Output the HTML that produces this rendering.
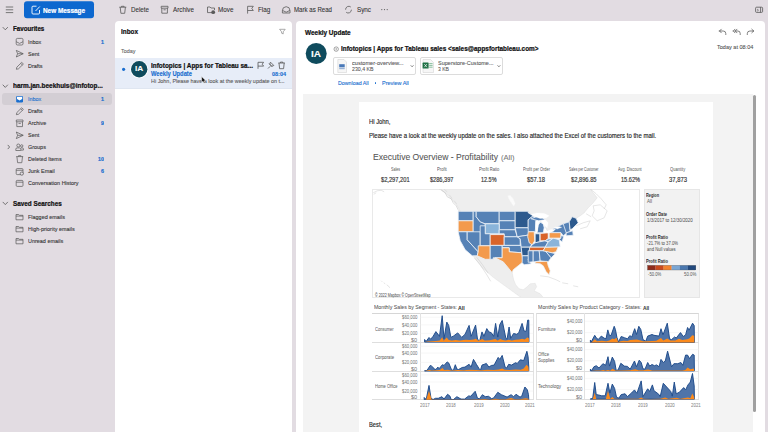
<!DOCTYPE html>
<html><head><meta charset="utf-8"><style>
html,body{margin:0;padding:0;}
body{width:768px;height:432px;overflow:hidden;position:relative;background:#e2dce2;font-family:"Liberation Sans",sans-serif;}
.t{position:absolute;white-space:nowrap;transform:scale(0.25);transform-origin:0 0;}
.r{position:absolute;display:block;}
</style></head><body>
<svg class="r" style="left:0px;top:0px;" width="110" height="20" viewBox="0 0 110 20">
<g stroke="#6a6a6a" stroke-width="0.9" stroke-linecap="round">
<line x1="6.2" y1="7" x2="12.8" y2="7"/><line x1="6.2" y1="9.8" x2="12.8" y2="9.8"/><line x1="6.2" y1="12.6" x2="12.8" y2="12.6"/></g>
<rect x="24" y="1.2" width="70" height="17" rx="3" fill="#0d68cf"/>
<g fill="none" stroke="#fff" stroke-width="0.9"><path d="M36.5 6.2 H33 a1 1 0 0 0 -1 1 V13 a1 1 0 0 0 1 1 H38.5 a1 1 0 0 0 1 -1 V10"/><path d="M35.5 11 L39.8 6.5"/></g>
</svg>
<div class="t" style="left:43.00px;top:-0.10px;font-size:29.20px;line-height:80px;color:#ffffff;transform:scale(0.2193,0.25);-webkit-text-stroke:0.95px #ffffff;font-weight:700;">New Message</div>
<svg class="r" style="left:110px;top:0px;" width="290" height="20" viewBox="110 0 290 20">
<g fill="none" stroke="#5a5a5a" stroke-width="0.8" stroke-linejoin="round">
<path d="M119.3 7.2 H126.3 M121.5 7.2 V6.3 H124.1 V7.2 M120.2 7.2 L120.9 13.3 H124.7 L125.4 7.2"/>
<path d="M161.2 6.3 H168 V8.2 H161.2 Z M161.8 8.2 V13.2 H167.4 V8.2 M163.5 9.8 H165.7"/>
<path d="M207.5 7 V12.6 H212 M207.5 7 H210 L211 8 H214.5 V10"/>
<path d="M247.6 13.6 V6.3 H253.3 L251.8 8.4 L253.3 10.5 H247.6"/>
<path d="M282.4 10.6 Q282.4 6.9 286.2 6.7 Q290 6.9 290 10.6 V13 H282.4 Z M282.4 10.4 L286.2 12.2 L290 10.4"/>
<path d="M350.8 7 A3.2 3.2 0 0 0 345.6 9.7 M346.2 12.3 A3.2 3.2 0 0 0 351.4 9.7"/>
</g>
<circle cx="213.2" cy="12.2" r="1.9" fill="#5a5a5a"/>
<g fill="#5a5a5a"><circle cx="381.8" cy="9.6" r="0.6"/><circle cx="384.5" cy="9.6" r="0.6"/><circle cx="387.2" cy="9.6" r="0.6"/></g>
</svg>
<div class="t" style="left:130.80px;top:-0.20px;font-size:26.40px;line-height:80px;color:#333333;transform:scale(0.2359,0.25);-webkit-text-stroke:0.33px #333333;">Delete</div>
<div class="t" style="left:172.90px;top:-0.20px;font-size:26.40px;line-height:80px;color:#333333;transform:scale(0.2386,0.25);-webkit-text-stroke:0.33px #333333;">Archive</div>
<div class="t" style="left:218.20px;top:-0.20px;font-size:26.40px;line-height:80px;color:#333333;transform:scale(0.2401,0.25);-webkit-text-stroke:0.33px #333333;">Move</div>
<div class="t" style="left:257.80px;top:-0.20px;font-size:26.40px;line-height:80px;color:#333333;transform:scale(0.2395,0.25);-webkit-text-stroke:0.33px #333333;">Flag</div>
<div class="t" style="left:294.00px;top:-0.20px;font-size:26.40px;line-height:80px;color:#333333;transform:scale(0.2313,0.25);-webkit-text-stroke:0.33px #333333;">Mark as Read</div>
<div class="t" style="left:356.50px;top:-0.20px;font-size:26.40px;line-height:80px;color:#333333;transform:scale(0.2385,0.25);-webkit-text-stroke:0.33px #333333;">Sync</div>
<svg class="r" style="left:752px;top:4px;" width="14" height="12" viewBox="752 4 14 12"><rect x="755.6" y="7.2" width="7" height="5.2" rx="1" fill="none" stroke="#555" stroke-width="0.8"/><path d="M760.6 7.2 V12.4" stroke="#555" stroke-width="0.8"/><path d="M757 9 L758.5 10.2 L757 11.2" fill="none" stroke="#555" stroke-width="0.6"/></svg>
<svg class="r" style="left:0px;top:20px;" width="112" height="230" viewBox="0 20 112 230">
<g fill="none" stroke="#505050" stroke-width="0.75" stroke-linecap="round" stroke-linejoin="round">
<path d="M3 27.4 L5.3 29.8 L7.6 27.4"/>
<path d="M3 85 L5.3 87.4 L7.6 85"/>
<path d="M3 202.2 L5.3 204.6 L7.6 202.2"/>
<path d="M8 145.2 L9.6 147 L8 148.8"/>
</g>
</svg>
<div class="t" style="left:12.70px;top:19.10px;font-size:26.80px;line-height:80px;color:#111;transform:scale(0.2310,0.25);-webkit-text-stroke:0.87px #111;font-weight:700;">Favourites</div>
<div class="t" style="left:12.70px;top:76.10px;font-size:28.00px;line-height:80px;color:#111;transform:scale(0.2295,0.25);-webkit-text-stroke:0.91px #111;font-weight:700;">harm.jan.beekhuis@infotop...</div>
<div class="t" style="left:12.50px;top:193.90px;font-size:26.80px;line-height:80px;color:#111;transform:scale(0.2374,0.25);-webkit-text-stroke:0.87px #111;font-weight:700;">Saved Searches</div>
<div class="r" style="left:2px;top:93.2px;width:110px;height:11.599999999999994px;background:#d3ced4;border-radius:3px;"></div>
<div class="t" style="left:28.00px;top:31.70px;font-size:24.80px;line-height:80px;color:#333333;transform:scale(0.2198,0.25);-webkit-text-stroke:0.43px #333333;">Inbox</div>
<div class="t" style="left:101.05px;top:31.70px;font-size:21.20px;line-height:80px;color:#1a6ecf;-webkit-text-stroke:0.69px #1a6ecf;font-weight:700;">1</div>
<div class="t" style="left:28.00px;top:43.70px;font-size:24.80px;line-height:80px;color:#333333;transform:scale(0.2198,0.25);-webkit-text-stroke:0.43px #333333;">Sent</div>
<div class="t" style="left:28.00px;top:55.80px;font-size:24.80px;line-height:80px;color:#333333;transform:scale(0.2198,0.25);-webkit-text-stroke:0.43px #333333;">Drafts</div>
<div class="t" style="left:28.00px;top:89.20px;font-size:24.80px;line-height:80px;color:#1a6ecf;transform:scale(0.2198,0.25);-webkit-text-stroke:0.43px #1a6ecf;">Inbox</div>
<div class="t" style="left:101.05px;top:89.20px;font-size:21.20px;line-height:80px;color:#1a6ecf;-webkit-text-stroke:0.69px #1a6ecf;font-weight:700;">1</div>
<div class="t" style="left:28.00px;top:101.20px;font-size:24.80px;line-height:80px;color:#333333;transform:scale(0.2198,0.25);-webkit-text-stroke:0.43px #333333;">Drafts</div>
<div class="t" style="left:28.00px;top:113.30px;font-size:24.80px;line-height:80px;color:#333333;transform:scale(0.2198,0.25);-webkit-text-stroke:0.43px #333333;">Archive</div>
<div class="t" style="left:101.05px;top:113.30px;font-size:21.20px;line-height:80px;color:#1a6ecf;-webkit-text-stroke:0.69px #1a6ecf;font-weight:700;">9</div>
<div class="t" style="left:28.00px;top:125.30px;font-size:24.80px;line-height:80px;color:#333333;transform:scale(0.2198,0.25);-webkit-text-stroke:0.43px #333333;">Sent</div>
<div class="t" style="left:28.00px;top:137.20px;font-size:24.80px;line-height:80px;color:#333333;transform:scale(0.2198,0.25);-webkit-text-stroke:0.43px #333333;">Groups</div>
<div class="t" style="left:28.00px;top:149.30px;font-size:24.80px;line-height:80px;color:#333333;transform:scale(0.2198,0.25);-webkit-text-stroke:0.43px #333333;">Deleted Items</div>
<div class="t" style="left:98.11px;top:149.30px;font-size:21.20px;line-height:80px;color:#1a6ecf;-webkit-text-stroke:0.69px #1a6ecf;font-weight:700;">10</div>
<div class="t" style="left:28.00px;top:161.30px;font-size:24.80px;line-height:80px;color:#333333;transform:scale(0.2198,0.25);-webkit-text-stroke:0.43px #333333;">Junk Email</div>
<div class="t" style="left:101.05px;top:161.30px;font-size:21.20px;line-height:80px;color:#1a6ecf;-webkit-text-stroke:0.69px #1a6ecf;font-weight:700;">6</div>
<div class="t" style="left:28.00px;top:173.30px;font-size:24.80px;line-height:80px;color:#333333;transform:scale(0.2198,0.25);-webkit-text-stroke:0.43px #333333;">Conversation History</div>
<div class="t" style="left:28.00px;top:206.80px;font-size:24.80px;line-height:80px;color:#333333;transform:scale(0.2198,0.25);-webkit-text-stroke:0.43px #333333;">Flagged emails</div>
<div class="t" style="left:28.00px;top:218.80px;font-size:24.80px;line-height:80px;color:#333333;transform:scale(0.2198,0.25);-webkit-text-stroke:0.43px #333333;">High-priority emails</div>
<div class="t" style="left:28.00px;top:230.80px;font-size:24.80px;line-height:80px;color:#333333;transform:scale(0.2198,0.25);-webkit-text-stroke:0.43px #333333;">Unread emails</div>
<svg class="r" style="left:10px;top:30px;" width="20" height="220" viewBox="10 30 20 220"><rect x="16.2" y="38.400000000000006" width="6.8" height="6.6" rx="1.2" fill="none" stroke="#585858" stroke-width="0.7"/><path d="M16.2 41.7 L19.6 43.400000000000006 L23 41.7" fill="none" stroke="#585858" stroke-width="0.7"/><path d="M16.3 50.400000000000006 L23.2 53.7 L16.3 57.00000000000001 L17.6 53.7 Z M17.6 53.7 H23.2" fill="none" stroke="#585858" stroke-width="0.7" stroke-linejoin="round"/><path d="M16.4 69.3 L16.8 67.2 L21.7 62.4 L23.4 64.0 L18.5 68.8 Z M20.7 63.4 L22.4 65.0" fill="none" stroke="#585858" stroke-width="0.7" stroke-linejoin="round"/><rect x="16.2" y="95.9" width="6.8" height="6.6" rx="1.2" fill="#1a6ecf"/><path d="M17 96.7 H22.2 V99.10000000000001 L19.6 100.5 L17 99.10000000000001 Z" fill="#fff"/><path d="M16.4 114.7 L16.8 112.60000000000001 L21.7 107.80000000000001 L23.4 109.4 L18.5 114.2 Z M20.7 108.80000000000001 L22.4 110.4" fill="none" stroke="#585858" stroke-width="0.7" stroke-linejoin="round"/><path d="M16.3 120.0 H23 V121.8 H16.3 Z M16.8 121.8 V126.6 H22.5 V121.8 M18.5 123.4 H20.8" fill="none" stroke="#585858" stroke-width="0.7"/><path d="M16.3 132.0 L23.2 135.3 L16.3 138.6 L17.6 135.3 Z M17.6 135.3 H23.2" fill="none" stroke="#585858" stroke-width="0.7" stroke-linejoin="round"/><circle cx="18.3" cy="145.49999999999997" r="1.5" fill="none" stroke="#585858" stroke-width="0.7"/><circle cx="21.7" cy="145.89999999999998" r="1.2" fill="none" stroke="#585858" stroke-width="0.7"/><path d="M15.8 150.49999999999997 V149.2 a1.3 1.3 0 0 1 1.3 -1.3 H19.5 a1.3 1.3 0 0 1 1.3 1.3 V150.49999999999997 Z M21 147.89999999999998 H22.4 a1 1 0 0 1 1 1 V150.09999999999997 H21" fill="none" stroke="#585858" stroke-width="0.7"/><path d="M16.2 156.6 H23.2 M18.5 156.6 V155.7 H20.9 V156.6 M16.9 156.6 L17.6 162.7 H21.8 L22.5 156.6" fill="none" stroke="#585858" stroke-width="0.7"/><rect x="16.2" y="168.6" width="6.8" height="6" rx="1" fill="none" stroke="#585858" stroke-width="0.7"/><path d="M16.2 170.3 H23" stroke="#585858" stroke-width="0.7"/><circle cx="21.8" cy="173.6" r="1.6" fill="#e2dce2" stroke="#585858" stroke-width="0.7"/><rect x="16.2" y="180.4" width="6.8" height="6" rx="1" fill="none" stroke="#585858" stroke-width="0.7"/><path d="M16.2 182.2 H23" stroke="#585858" stroke-width="0.7"/><path d="M16 214.5 H18.6 L19.4 215.3 H23 V219.8 H16 Z M16 216.1 H23" fill="none" stroke="#585858" stroke-width="0.7" stroke-linejoin="round"/><path d="M16 226.5 H18.6 L19.4 227.3 H23 V231.8 H16 Z M16 228.1 H23" fill="none" stroke="#585858" stroke-width="0.7" stroke-linejoin="round"/><path d="M16 238.5 H18.6 L19.4 239.3 H23 V243.8 H16 Z M16 240.1 H23" fill="none" stroke="#585858" stroke-width="0.7" stroke-linejoin="round"/></svg>
<div class="r" style="left:115px;top:21px;width:177px;height:411px;background:#ffffff;border-radius:4px 4px 0 0;"></div>
<div class="t" style="left:121.00px;top:22.00px;font-size:27.60px;line-height:80px;color:#111;transform:scale(0.2310,0.25);-webkit-text-stroke:0.90px #111;font-weight:700;">Inbox</div>
<svg class="r" style="left:276px;top:26px;" width="14" height="12" viewBox="276 26 14 12"><path d="M279.6 29.3 H285.2 L283.2 31.8 V33.9 L281.6 33.2 V31.8 Z" fill="none" stroke="#888" stroke-width="0.7" stroke-linejoin="round"/></svg>
<div class="t" style="left:121.00px;top:40.80px;font-size:23.60px;line-height:80px;color:#616161;transform:scale(0.2287,0.25);-webkit-text-stroke:0.35px #616161;">Today</div>
<div class="r" style="left:115px;top:57.5px;width:177px;height:30.5px;background:#e7edf8;"></div>
<svg class="r" style="left:115px;top:57px;" width="177" height="32" viewBox="115 57 177 32">
<circle cx="123.6" cy="69.3" r="1.6" fill="#1a6ecf"/>
<circle cx="139.2" cy="69.3" r="9" fill="#ffffff"/>
<circle cx="139.2" cy="69.3" r="8.2" fill="#0f4b5d"/>
<g fill="none" stroke="#555555" stroke-width="0.8" stroke-linejoin="round">
<path d="M258 68.8 V62.3 H263.6 L262.2 64.2 L263.6 66.1 H258"/>
<path d="M268 68.5 L270.2 66.3 M269 63.6 L272.2 66.8 M270.5 62.2 L273.8 65.5 L271.8 66.2 L269.7 64.2 Z"/>
<path d="M278.3 63 H284.9 M280.4 63 V62.1 H282.8 V63 M279 63 L279.6 68.7 H283.6 L284.2 63"/>
</g>
</svg>
<div class="t" style="left:135.20px;top:59.40px;font-size:28.00px;line-height:80px;color:#ffffff;transform:scale(0.2929,0.25);-webkit-text-stroke:0.28px #ffffff;font-weight:700;">IA</div>
<div class="t" style="left:150.70px;top:55.70px;font-size:27.60px;line-height:80px;color:#111;transform:scale(0.2326,0.25);-webkit-text-stroke:0.90px #111;font-weight:700;">Infotopics | Apps for Tableau sa...</div>
<div class="t" style="left:150.70px;top:64.10px;font-size:25.60px;line-height:80px;color:#1a6ecf;transform:scale(0.2257,0.25);-webkit-text-stroke:0.51px #1a6ecf;font-weight:700;">Weekly Update</div>
<div class="t" style="left:271.50px;top:63.90px;font-size:24.80px;line-height:80px;color:#1a6ecf;transform:scale(0.2207,0.25);-webkit-text-stroke:0.50px #1a6ecf;font-weight:700;">08:04</div>
<div class="t" style="left:150.70px;top:71.20px;font-size:24.00px;line-height:80px;color:#5b5b5b;transform:scale(0.2259,0.25);-webkit-text-stroke:0.42px #5b5b5b;">Hi John, Please have a look at the weekly update on t...</div>
<div class="r" style="left:115px;top:87.5px;width:177px;height:0.5999999999999943px;background:#dfe6f1;"></div>
<svg class="r" style="left:199px;top:74px;" width="11" height="12" viewBox="199 74 11 12"><path d="M201.6 76.6 L201.6 82.4 L203 81.2 L204 83.3 L205 82.8 L204.1 80.8 L206 80.8 Z" fill="#111" stroke="#fff" stroke-width="0.5"/></svg>
<div class="r" style="left:296px;top:21px;width:469px;height:411px;background:#ffffff;border-radius:4px 4px 0 0;"></div>
<div class="t" style="left:305.00px;top:22.50px;font-size:27.60px;line-height:80px;color:#111;transform:scale(0.2334,0.25);-webkit-text-stroke:0.90px #111;font-weight:700;">Weekly Update</div>
<svg class="r" style="left:714px;top:26px;" width="44" height="12" viewBox="714 26 44 12">
<g fill="none" stroke="#555" stroke-width="0.75" stroke-linecap="round" stroke-linejoin="round">
<path d="M719.5 31 L721.3 29.2 M719.5 31 L721.3 32.8 M719.5 31 H723.2 a2.6 2.6 0 0 1 2.6 2.6 V34.6"/>
<path d="M735.2 31 L737 29.2 M735.2 31 L737 32.8 M733.2 31 L735 29.2 M733.2 31 L735 32.8 M735.2 31 H737.8 a2.4 2.4 0 0 1 2.4 2.4 V34.6"/>
<path d="M753.6 31 L751.8 29.2 M753.6 31 L751.8 32.8 M753.6 31 H749.9 a2.6 2.6 0 0 0 -2.6 2.6 V34.6"/>
</g></svg>
<svg class="r" style="left:300px;top:40px;" width="45" height="28" viewBox="300 40 45 28">
<circle cx="316.2" cy="53.5" r="10.5" fill="#0f4b5d"/>
<circle cx="336.2" cy="49.1" r="2.2" fill="none" stroke="#666" stroke-width="0.6"/>
<path d="M336.2 48 V50.2" stroke="#666" stroke-width="0.6"/>
</svg>
<div class="t" style="left:311.30px;top:43.70px;font-size:34.40px;line-height:80px;color:#ffffff;transform:scale(0.2907,0.25);-webkit-text-stroke:0.34px #ffffff;font-weight:700;">IA</div>
<div class="t" style="left:341.00px;top:38.80px;font-size:27.60px;line-height:80px;color:#111;transform:scale(0.2318,0.25);-webkit-text-stroke:0.90px #111;font-weight:700;">Infotopics | Apps for Tableau sales &lt;sales@appsfortableau.com&gt;</div>
<div class="t" style="left:716.70px;top:37.00px;font-size:23.60px;line-height:80px;color:#505050;transform:scale(0.2345,0.25);-webkit-text-stroke:0.35px #505050;">Today at 08:04</div>
<div class="r" style="left:333px;top:57px;width:83.39999999999998px;height:18px;background:#ffffff;box-sizing:border-box;border:0.6px solid #dcdcdc;border-radius:2px;"></div>
<div class="r" style="left:420px;top:57.4px;width:83.39999999999998px;height:17.6px;background:#ffffff;box-sizing:border-box;border:0.6px solid #dcdcdc;border-radius:2px;"></div>
<svg class="r" style="left:333px;top:57px;" width="171" height="18" viewBox="333 57 171 18">
<path d="M337.8 59.5 H344 L346.5 62 V72.5 H337.8 Z" fill="#f6f6f6" stroke="#cfcfcf" stroke-width="0.5"/>
<rect x="339.2" y="64.2" width="5.5" height="3" fill="#4a79b8"/>
<rect x="339.2" y="67.6" width="5.5" height="1.6" fill="#9ab3d6"/>
<path d="M410.8 65.4 L412.1 66.7 L413.4 65.4" fill="none" stroke="#444" stroke-width="0.75"/>
<path d="M423 59.5 H430.5 L433.5 62.5 V72.5 H423 Z" fill="#f6f6f6" stroke="#cfcfcf" stroke-width="0.5"/>
<rect x="422.6" y="62.6" width="6" height="6" rx="0.6" fill="#1d7044"/>
<path d="M424.3 64.1 L426.9 67.2 M426.9 64.1 L424.3 67.2" stroke="#fff" stroke-width="0.7"/>
<path d="M429.2 63.6 H432.6 M429.2 65.4 H432.6 M429.2 67.2 H432.6" stroke="#3c9a62" stroke-width="0.6"/>
<path d="M497.6 65.4 L498.9 66.7 L500.2 65.4" fill="none" stroke="#444" stroke-width="0.75"/>
</svg>
<div class="t" style="left:351.50px;top:53.20px;font-size:23.60px;line-height:80px;color:#555555;transform:scale(0.2380,0.25);-webkit-text-stroke:0.35px #555555;">customer-overview...</div>
<div class="t" style="left:351.50px;top:59.30px;font-size:23.60px;line-height:80px;color:#555555;transform:scale(0.2214,0.25);-webkit-text-stroke:0.35px #555555;">230,4 KB</div>
<div class="t" style="left:438.00px;top:53.20px;font-size:23.60px;line-height:80px;color:#555555;transform:scale(0.2338,0.25);-webkit-text-stroke:0.35px #555555;">Superstore-Custome...</div>
<div class="t" style="left:438.00px;top:59.30px;font-size:23.60px;line-height:80px;color:#555555;transform:scale(0.2150,0.25);-webkit-text-stroke:0.35px #555555;">3 KB</div>
<div class="t" style="left:337.90px;top:73.00px;font-size:23.60px;line-height:80px;color:#1a6ecf;transform:scale(0.2250,0.25);-webkit-text-stroke:0.47px #1a6ecf;">Download All</div>
<div class="r" style="left:375px;top:82.3px;width:1.3000000000000114px;height:1.2999999999999972px;background:#1a6ecf;border-radius:50%;"></div>
<div class="t" style="left:382.00px;top:73.00px;font-size:23.60px;line-height:80px;color:#1a6ecf;transform:scale(0.2322,0.25);-webkit-text-stroke:0.47px #1a6ecf;">Preview All</div>
<div class="r" style="left:303px;top:93.5px;width:449.5px;height:338.5px;background:#f3f3f3;"></div>
<div class="r" style="left:753.4px;top:95px;width:3.0px;height:317px;background:#a0a0a0;border-radius:1.5px;"></div>
<div class="r" style="left:359.4px;top:102px;width:353.6px;height:330px;background:#ffffff;"></div>
<div class="t" style="left:368.90px;top:111.50px;font-size:25.60px;line-height:80px;color:#1f1f1f;transform:scale(0.2289,0.25);-webkit-text-stroke:0.58px #1f1f1f;">Hi John,</div>
<div class="t" style="left:368.90px;top:125.60px;font-size:25.60px;line-height:80px;color:#1f1f1f;transform:scale(0.2344,0.25);-webkit-text-stroke:0.58px #1f1f1f;">Please have a look at the weekly update on the sales. I also attached the Excel of the customers to the mail.</div>
<div class="t" style="left:372.90px;top:146.80px;font-size:35.20px;line-height:80px;color:#555555;transform:scale(0.2439,0.25);-webkit-text-stroke:0.26px #555555;">Executive Overview - Profitability</div>
<div class="t" style="left:500.50px;top:147.60px;font-size:27.20px;line-height:80px;color:#777777;transform:scale(0.2793,0.25);-webkit-text-stroke:0.20px #777777;">(All)</div>
<div class="t" style="left:390.80px;top:158.90px;font-size:18.80px;line-height:80px;color:#555555;transform:scale(0.1956,0.25);-webkit-text-stroke:0.00px #555555;">Sales</div>
<div class="t" style="left:381.10px;top:169.90px;font-size:26.00px;line-height:80px;color:#333333;transform:scale(0.2198,0.25);-webkit-text-stroke:0.65px #333333;">$2,297,201</div>
<div class="t" style="left:437.10px;top:158.90px;font-size:18.80px;line-height:80px;color:#555555;transform:scale(0.2233,0.25);-webkit-text-stroke:0.00px #555555;">Profit</div>
<div class="t" style="left:430.30px;top:169.90px;font-size:26.00px;line-height:80px;color:#333333;transform:scale(0.2158,0.25);-webkit-text-stroke:0.65px #333333;">$286,397</div>
<div class="t" style="left:479.05px;top:158.90px;font-size:18.80px;line-height:80px;color:#555555;transform:scale(0.2183,0.25);-webkit-text-stroke:0.00px #555555;">Profit Ratio</div>
<div class="t" style="left:481.45px;top:169.90px;font-size:26.00px;line-height:80px;color:#333333;transform:scale(0.2103,0.25);-webkit-text-stroke:0.65px #333333;">12.5%</div>
<div class="t" style="left:522.80px;top:158.90px;font-size:18.80px;line-height:80px;color:#555555;transform:scale(0.2084,0.25);-webkit-text-stroke:0.00px #555555;">Profit per Order</div>
<div class="t" style="left:527.30px;top:169.90px;font-size:26.00px;line-height:80px;color:#333333;transform:scale(0.2264,0.25);-webkit-text-stroke:0.65px #333333;">$57.18</div>
<div class="t" style="left:568.75px;top:158.90px;font-size:18.80px;line-height:80px;color:#555555;transform:scale(0.1776,0.25);-webkit-text-stroke:0.00px #555555;">Sales per Customer</div>
<div class="t" style="left:570.75px;top:169.90px;font-size:26.00px;line-height:80px;color:#333333;transform:scale(0.2205,0.25);-webkit-text-stroke:0.65px #333333;">$2,896.85</div>
<div class="t" style="left:618.35px;top:158.90px;font-size:18.80px;line-height:80px;color:#555555;transform:scale(0.2049,0.25);-webkit-text-stroke:0.00px #555555;">Avg. Discount</div>
<div class="t" style="left:620.70px;top:169.90px;font-size:26.00px;line-height:80px;color:#333333;transform:scale(0.2155,0.25);-webkit-text-stroke:0.65px #333333;">15.62%</div>
<div class="t" style="left:669.95px;top:158.90px;font-size:18.80px;line-height:80px;color:#555555;transform:scale(0.2185,0.25);-webkit-text-stroke:0.00px #555555;">Quantity</div>
<div class="t" style="left:668.60px;top:169.90px;font-size:26.00px;line-height:80px;color:#333333;transform:scale(0.2264,0.25);-webkit-text-stroke:0.65px #333333;">37,873</div>
<div class="r" style="left:372.2px;top:188.6px;width:268.3px;height:109.4px;background:#ffffff;box-sizing:border-box;border:0.6px solid #e9e9e9;"></div>
<svg class="r" style="left:372.8px;top:189.2px;" width="267.09999999999997" height="108.19999999999999" viewBox="372.8 189.2 267.09999999999997 108.19999999999999"><polygon points="439,189 590,189 593,193 597,198 593,203 588,208 584,213 580,216 576,218.5 572,217 570,221 566,224 559,226 553,229 550,232 547,231 545,227 541,222 536,218 531,215 528,211.5 460,211.5 457,206 452,200 446,194" fill="#eeeeee" stroke="#d0d0d0" stroke-width="0.35" stroke-linejoin="round"/><path d="M590 189 L596 194 L601 199 L606 205 L604 209 M593 206 L600 205 L607 211 L604 218 L597 221 L592 216 L594 211 Z M576 226 L583 223 L590 221 L587 227 L580 229 M586 214 L591 217" fill="none" stroke="#c6c6c6" stroke-width="0.45"/><polygon points="507.5,196 510,195.5 513,199 515,204 513.5,206.5 511,203 508.5,199" fill="#fbfbfb" stroke="#f6f6f6" stroke-width="0.3" stroke-linejoin="round"/><path d="M373 193 L377 191 L381 190.5 L384 192 M373.5 194.5 L376 193" fill="none" stroke="#c8c8c8" stroke-width="0.45"/><path d="M381 281 L382 282 M383.5 283 L385 284 M386.5 285 L388.5 286.5 L389.5 288" fill="none" stroke="#c8c8c8" stroke-width="0.5"/><polygon points="473,256 477,256.5 485,259.5 495,258 499,260 503,262 508,268 512,273 513.5,280 515.5,285 519,289 523,290 527,287 530,284 535,283.5 536.5,287 534,291 540,294 545,300 524,300 517,295 506,287 493,277.5 482,268" fill="#eeeeee" stroke="#d4d4d4" stroke-width="0.3" stroke-linejoin="round"/><path d="M474 258 L480 265 L486 274 L490.5 281.5 M476.5 257.5 L482 264.5 L488 273.5" fill="none" stroke="#c4c4c4" stroke-width="0.45"/><path d="M540 276 L548 277 L556 280 L560 282 M562 283 L568 284 M573 286 L578 287" fill="none" stroke="#cccccc" stroke-width="0.5"/><polygon points="458,211.5 473,211.5 473,221 458,221" fill="#5682b6" stroke="#eef3f9" stroke-width="0.8" stroke-linejoin="round"/><polygon points="458,221 473,221 473,232 458,232" fill="#f39a4c" stroke="#eef3f9" stroke-width="0.8" stroke-linejoin="round"/><polygon points="473,211.5 476,211.5 476,217 480,222 485,224 485,233 473,233" fill="#5682b6" stroke="#eef3f9" stroke-width="0.8" stroke-linejoin="round"/><polygon points="476,211.5 499,211.5 499,224 485,224 480,222 476,217" fill="#5682b6" stroke="#eef3f9" stroke-width="0.8" stroke-linejoin="round"/><polygon points="499,211.5 515,211.5 515,221 499,221" fill="#5682b6" stroke="#eef3f9" stroke-width="0.8" stroke-linejoin="round"/><polygon points="499,221 515,221 515,230 499,230" fill="#5682b6" stroke="#eef3f9" stroke-width="0.8" stroke-linejoin="round"/><polygon points="485,224 499,224 499,234 485,234" fill="#8ab4da" stroke="#eef3f9" stroke-width="0.8" stroke-linejoin="round"/><polygon points="499,230 515,230 517,237 504,237 504,234 499,234" fill="#5682b6" stroke="#eef3f9" stroke-width="0.8" stroke-linejoin="round"/><polygon points="515,211.5 528,211.5 528,213 533,216 528,220 528,228 515,228" fill="#2d5a8e" stroke="#eef3f9" stroke-width="0.8" stroke-linejoin="round"/><polygon points="515,228 528,228 530,235 517,237" fill="#5682b6" stroke="#eef3f9" stroke-width="0.8" stroke-linejoin="round"/><polygon points="528,220 533,216 536,221 535,232 528,232 528,228" fill="#5682b6" stroke="#eef3f9" stroke-width="0.8" stroke-linejoin="round"/><polygon points="537,233 537.5,226 540,222.5 543,224 544,228 543,233" fill="#5682b6" stroke="#eef3f9" stroke-width="0.8" stroke-linejoin="round"/><polygon points="531,219 537,216.5 541,217 545,220 538,221" fill="#5682b6" stroke="#eef3f9" stroke-width="0.8" stroke-linejoin="round"/><polygon points="458,232 467,232 467,240 478,252 477,256 472,256 465,250 460,241" fill="#5682b6" stroke="#eef3f9" stroke-width="0.8" stroke-linejoin="round"/><polygon points="467,232 480,232 480,246 478,252 467,240" fill="#5682b6" stroke="#eef3f9" stroke-width="0.8" stroke-linejoin="round"/><polygon points="480,226 485,226 485,234 490,234 490,246 480,246" fill="#5682b6" stroke="#eef3f9" stroke-width="0.8" stroke-linejoin="round"/><polygon points="478,246 490,246 490,259.5 485,259.5 477,256 478,252" fill="#f39a4c" stroke="#eef3f9" stroke-width="0.8" stroke-linejoin="round"/><polygon points="490,234.8 504,234.8 504,245.6 490,245.6" fill="#d9642a" stroke="#eef3f9" stroke-width="0.8" stroke-linejoin="round"/><polygon points="490,245.6 502,245.6 502,258 493,258 493,259.5 490,259.5" fill="#5682b6" stroke="#eef3f9" stroke-width="0.8" stroke-linejoin="round"/><polygon points="504,237 517,237 520,239 520,245.6 504,245.6" fill="#5682b6" stroke="#eef3f9" stroke-width="0.8" stroke-linejoin="round"/><polygon points="502,245.6 521,245.6 521.5,253 509,252 509,248 502,248" fill="#5682b6" stroke="#eef3f9" stroke-width="0.8" stroke-linejoin="round"/><polygon points="502,248 509,248 509,252 521.5,253 523,262 518,266 513,270 512,273 508,268 503,262 499,260 495,258 502,258" fill="#f39a4c" stroke="#eef3f9" stroke-width="0.8" stroke-linejoin="round"/><polygon points="517,237 530,235 532,243 530,247.4 521,247.4 520,239" fill="#5682b6" stroke="#eef3f9" stroke-width="0.8" stroke-linejoin="round"/><polygon points="521,247.4 530,247.4 529,256 522,256" fill="#2d5a8e" stroke="#eef3f9" stroke-width="0.8" stroke-linejoin="round"/><polygon points="522,256 529,256 528,260 531,264 524,265 522,263" fill="#5682b6" stroke="#eef3f9" stroke-width="0.8" stroke-linejoin="round"/><polygon points="528,232 534,232 534.5,241 532,245 529,243 527.5,237" fill="#f39a4c" stroke="#eef3f9" stroke-width="0.8" stroke-linejoin="round"/><polygon points="535,234 539.6,234 539.6,242 535,243" fill="#2d5a8e" stroke="#eef3f9" stroke-width="0.8" stroke-linejoin="round"/><polygon points="540,233.7 548,233 548,239 545,241 540,241" fill="#d9642a" stroke="#eef3f9" stroke-width="0.8" stroke-linejoin="round"/><polygon points="532,245 535,243 539.6,242 545,241 548,242 545,247.4 530,247.4" fill="#5682b6" stroke="#eef3f9" stroke-width="0.8" stroke-linejoin="round"/><polygon points="529.6,247.4 545,247.4 543,251 529,251" fill="#d9642a" stroke="#eef3f9" stroke-width="0.8" stroke-linejoin="round"/><polygon points="528,251 533,251 533,262 528,262.5" fill="#5682b6" stroke="#eef3f9" stroke-width="0.8" stroke-linejoin="round"/><polygon points="533,251 539,251 540,261 535,262 533,262" fill="#5682b6" stroke="#eef3f9" stroke-width="0.8" stroke-linejoin="round"/><polygon points="539,251 545,251 551,258 548,262 540,261" fill="#5682b6" stroke="#eef3f9" stroke-width="0.8" stroke-linejoin="round"/><polygon points="545,251 552,253 555,254 551,258" fill="#5682b6" stroke="#eef3f9" stroke-width="0.8" stroke-linejoin="round"/><polygon points="545,247.4 558,247 556,252 552,253 543,251" fill="#f39a4c" stroke="#eef3f9" stroke-width="0.8" stroke-linejoin="round"/><polygon points="545,247.4 548,242 553,238.3 559,240 560,247" fill="#8ab4da" stroke="#eef3f9" stroke-width="0.8" stroke-linejoin="round"/><polygon points="548,239 553,238.3 548,242 545,241" fill="#8ab4da" stroke="#eef3f9" stroke-width="0.8" stroke-linejoin="round"/><polygon points="549,232.8 560.7,232.8 560.7,238.3 549,238.3" fill="#f39a4c" stroke="#eef3f9" stroke-width="0.8" stroke-linejoin="round"/><polygon points="560.7,236 563.5,236.5 562,242 559,240 560.7,238.3" fill="#5682b6" stroke="#eef3f9" stroke-width="0.8" stroke-linejoin="round"/><polygon points="550,232.8 553,229 563,224 566,224 567,233 563,236 560.7,232.8" fill="#5682b6" stroke="#eef3f9" stroke-width="0.8" stroke-linejoin="round"/><polygon points="563,224 569,222 570,232 566,233" fill="#5682b6" stroke="#eef3f9" stroke-width="0.8" stroke-linejoin="round"/><polygon points="566,233 572.5,231 573,235.5 566,236" fill="#5682b6" stroke="#eef3f9" stroke-width="0.8" stroke-linejoin="round"/><polygon points="569,222 572,217 576,218.5 578,223 572,229 570,230" fill="#2d5a8e" stroke="#eef3f9" stroke-width="0.8" stroke-linejoin="round"/><polygon points="535,262 547,261.5 548,266 550,271 549,275 546,272 543,266 540,264 535,263.5" fill="#f39a4c" stroke="#eef3f9" stroke-width="0.8" stroke-linejoin="round"/><polygon points="531,214.5 537,213.2 544,213.8 549,216 546,218.2 540,218.6 534,216.8" fill="#ffffff" stroke="#ffffff" stroke-width="0.3" stroke-linejoin="round"/><polygon points="535.3,221.5 537.8,220.8 538.2,226 537.2,231.5 535.7,230.5 535.3,226" fill="#ffffff" stroke="#ffffff" stroke-width="0.3" stroke-linejoin="round"/><polygon points="541,221 545,220 548,223 547,228 544.5,226 542.5,223.5" fill="#ffffff" stroke="#ffffff" stroke-width="0.3" stroke-linejoin="round"/><polygon points="545.5,232 550,230 555.5,229.2 553,231.6 548,233.2" fill="#ffffff" stroke="#ffffff" stroke-width="0.3" stroke-linejoin="round"/><polygon points="553.5,227.8 559,226.8 561.5,227.5 557,229.3" fill="#ffffff" stroke="#ffffff" stroke-width="0.3" stroke-linejoin="round"/><path d="M441 190 L445 193 L447 197 L451 199 L453 203 L456 206 L458 210 L460 212" fill="none" stroke="#bdbdbd" stroke-width="0.5"/><path d="M444 189.5 L447 192 M449 195 L452 198.5 M454 201 L456.5 204" fill="none" stroke="#c9c9c9" stroke-width="0.4"/></svg>
<div class="t" style="left:375.00px;top:285.30px;font-size:18.40px;line-height:80px;color:#555555;transform:scale(0.1955,0.25);-webkit-text-stroke:0.14px #555555;">© 2022 Mapbox © OpenStreetMap</div>
<div class="r" style="left:643.5px;top:188.6px;width:56.5px;height:109.4px;background:#f2f2f2;box-sizing:border-box;border:0.5px solid #e6e6e6;"></div>
<div class="t" style="left:646.00px;top:184.60px;font-size:19.60px;line-height:80px;color:#333;transform:scale(0.1957,0.25);-webkit-text-stroke:0.15px #333;font-weight:700;">Region</div>
<div class="t" style="left:647.00px;top:190.60px;font-size:19.60px;line-height:80px;color:#666;transform:scale(0.2295,0.25);-webkit-text-stroke:0.15px #666;">All</div>
<div class="t" style="left:646.00px;top:203.60px;font-size:19.60px;line-height:80px;color:#333;transform:scale(0.2073,0.25);-webkit-text-stroke:0.15px #333;font-weight:700;">Order Date</div>
<div class="t" style="left:647.00px;top:209.70px;font-size:19.60px;line-height:80px;color:#555;transform:scale(0.2272,0.25);-webkit-text-stroke:0.15px #555;">1/3/2017 to 12/30/2020</div>
<div class="t" style="left:646.00px;top:227.20px;font-size:19.60px;line-height:80px;color:#333;transform:scale(0.2083,0.25);-webkit-text-stroke:0.15px #333;font-weight:700;">Profit Ratio</div>
<div class="t" style="left:647.20px;top:233.30px;font-size:19.60px;line-height:80px;color:#555;transform:scale(0.2139,0.25);-webkit-text-stroke:0.15px #555;">-21.7% to 37.0%</div>
<div class="t" style="left:647.20px;top:239.10px;font-size:19.60px;line-height:80px;color:#555;transform:scale(0.2142,0.25);-webkit-text-stroke:0.15px #555;">and Null values</div>
<div class="t" style="left:646.00px;top:251.30px;font-size:19.60px;line-height:80px;color:#333;transform:scale(0.2083,0.25);-webkit-text-stroke:0.15px #333;font-weight:700;">Profit Ratio</div>
<svg class="r" style="left:646px;top:264px;" width="53" height="8" viewBox="646 264 53 8"><rect x="647.50" y="265.3" width="8.15" height="4.7" fill="#8f2d1c"/><rect x="655.55" y="265.3" width="8.15" height="4.7" fill="#c94a1d"/><rect x="663.60" y="265.3" width="8.15" height="4.7" fill="#f2832f"/><rect x="671.65" y="265.3" width="8.15" height="4.7" fill="#7ba6d3"/><rect x="679.70" y="265.3" width="8.15" height="4.7" fill="#4b78af"/><rect x="687.75" y="265.3" width="8.15" height="4.7" fill="#22497e"/><rect x="647.5" y="265.3" width="48.3" height="4.7" fill="none" stroke="#555" stroke-width="0.3"/></svg>
<div class="t" style="left:647.50px;top:264.10px;font-size:19.60px;line-height:80px;color:#666;transform:scale(0.2142,0.25);-webkit-text-stroke:0.15px #666;">-50.0%</div>
<div class="t" style="left:683.80px;top:264.10px;font-size:19.60px;line-height:80px;color:#666;transform:scale(0.2213,0.25);-webkit-text-stroke:0.15px #666;">50.0%</div>
<div class="t" style="left:373.80px;top:297.40px;font-size:24.80px;line-height:80px;color:#555;transform:scale(0.2107,0.25);-webkit-text-stroke:0.19px #555;">Monthly Sales by Segment - States: </div>
<div class="t" style="left:458.20px;top:297.50px;font-size:21.60px;line-height:80px;color:#333;transform:scale(0.2427,0.25);-webkit-text-stroke:0.16px #333;font-weight:700;">All</div>
<div class="t" style="left:537.60px;top:297.40px;font-size:24.80px;line-height:80px;color:#555;transform:scale(0.2120,0.25);-webkit-text-stroke:0.19px #555;">Monthly Sales by Product Category - States: </div>
<div class="t" style="left:642.50px;top:297.50px;font-size:21.60px;line-height:80px;color:#333;transform:scale(0.2246,0.25);-webkit-text-stroke:0.16px #333;font-weight:700;">All</div>
<div class="r" style="left:372px;top:313px;width:162px;height:87px;background:transparent;box-sizing:border-box;border-top:0.7px solid #d6d6d6;border-right:0.6px solid #e2e2e2;"></div>
<div class="r" style="left:535.8px;top:313px;width:163.70000000000005px;height:87px;background:transparent;box-sizing:border-box;border-top:0.7px solid #d6d6d6;border-left:0.6px solid #e2e2e2;border-right:0.6px solid #e2e2e2;"></div>
<div class="r" style="left:419.6px;top:313px;width:0.6999999999999886px;height:87px;background:#e2e2e2;"></div>
<div class="r" style="left:584px;top:313px;width:0.7000000000000455px;height:87px;background:#e2e2e2;"></div>
<div class="r" style="left:372px;top:342.1px;width:162px;height:0.6000000000000227px;background:#dedede;"></div>
<div class="r" style="left:535.8px;top:342.1px;width:163.70000000000005px;height:0.6000000000000227px;background:#dedede;"></div>
<div class="r" style="left:372px;top:371px;width:162px;height:0.6000000000000227px;background:#dedede;"></div>
<div class="r" style="left:535.8px;top:371px;width:163.70000000000005px;height:0.6000000000000227px;background:#dedede;"></div>
<div class="r" style="left:372px;top:399.4px;width:162px;height:0.6000000000000227px;background:#dedede;"></div>
<div class="r" style="left:535.8px;top:399.4px;width:163.70000000000005px;height:0.6000000000000227px;background:#dedede;"></div>
<div class="t" style="left:374.70px;top:318.60px;font-size:20.00px;line-height:80px;color:#666;transform:scale(0.2027,0.25);-webkit-text-stroke:0.15px #666;">Consumer</div>
<div class="t" style="left:401.70px;top:306.90px;font-size:20.00px;line-height:80px;color:#808080;transform:scale(0.2144,0.25);-webkit-text-stroke:0.15px #808080;">$60,000</div>
<div class="t" style="left:401.70px;top:314.50px;font-size:20.00px;line-height:80px;color:#808080;transform:scale(0.2144,0.25);-webkit-text-stroke:0.15px #808080;">$40,000</div>
<div class="t" style="left:401.70px;top:323.00px;font-size:20.00px;line-height:80px;color:#808080;transform:scale(0.2144,0.25);-webkit-text-stroke:0.15px #808080;">$20,000</div>
<div class="t" style="left:411.00px;top:329.70px;font-size:20.00px;line-height:80px;color:#808080;transform:scale(0.2787,0.25);-webkit-text-stroke:0.15px #808080;">$0</div>
<div class="t" style="left:374.70px;top:347.10px;font-size:20.00px;line-height:80px;color:#666;transform:scale(0.2137,0.25);-webkit-text-stroke:0.15px #666;">Corporate</div>
<div class="t" style="left:401.70px;top:335.80px;font-size:20.00px;line-height:80px;color:#808080;transform:scale(0.2144,0.25);-webkit-text-stroke:0.15px #808080;">$60,000</div>
<div class="t" style="left:401.70px;top:342.70px;font-size:20.00px;line-height:80px;color:#808080;transform:scale(0.2144,0.25);-webkit-text-stroke:0.15px #808080;">$40,000</div>
<div class="t" style="left:401.70px;top:352.00px;font-size:20.00px;line-height:80px;color:#808080;transform:scale(0.2144,0.25);-webkit-text-stroke:0.15px #808080;">$20,000</div>
<div class="t" style="left:411.00px;top:358.50px;font-size:20.00px;line-height:80px;color:#808080;transform:scale(0.2787,0.25);-webkit-text-stroke:0.15px #808080;">$0</div>
<div class="t" style="left:374.70px;top:375.80px;font-size:20.00px;line-height:80px;color:#666;transform:scale(0.2031,0.25);-webkit-text-stroke:0.15px #666;">Home Office</div>
<div class="t" style="left:401.70px;top:364.50px;font-size:20.00px;line-height:80px;color:#808080;transform:scale(0.2144,0.25);-webkit-text-stroke:0.15px #808080;">$60,000</div>
<div class="t" style="left:401.70px;top:371.60px;font-size:20.00px;line-height:80px;color:#808080;transform:scale(0.2144,0.25);-webkit-text-stroke:0.15px #808080;">$40,000</div>
<div class="t" style="left:401.70px;top:380.70px;font-size:20.00px;line-height:80px;color:#808080;transform:scale(0.2144,0.25);-webkit-text-stroke:0.15px #808080;">$20,000</div>
<div class="t" style="left:411.00px;top:387.10px;font-size:20.00px;line-height:80px;color:#808080;transform:scale(0.2787,0.25);-webkit-text-stroke:0.15px #808080;">$0</div>
<div class="t" style="left:538.30px;top:318.60px;font-size:20.00px;line-height:80px;color:#666;transform:scale(0.2212,0.25);-webkit-text-stroke:0.15px #666;">Furniture</div>
<div class="t" style="left:566.50px;top:310.90px;font-size:20.00px;line-height:80px;color:#808080;transform:scale(0.2144,0.25);-webkit-text-stroke:0.15px #808080;">$40,000</div>
<div class="t" style="left:566.50px;top:322.20px;font-size:20.00px;line-height:80px;color:#808080;transform:scale(0.2144,0.25);-webkit-text-stroke:0.15px #808080;">$20,000</div>
<div class="t" style="left:575.80px;top:329.60px;font-size:20.00px;line-height:80px;color:#808080;transform:scale(0.2787,0.25);-webkit-text-stroke:0.15px #808080;">$0</div>
<div class="t" style="left:538.30px;top:343.80px;font-size:20.00px;line-height:80px;color:#666;transform:scale(0.2121,0.25);-webkit-text-stroke:0.15px #666;">Office</div>
<div class="t" style="left:566.50px;top:339.20px;font-size:20.00px;line-height:80px;color:#808080;transform:scale(0.2144,0.25);-webkit-text-stroke:0.15px #808080;">$40,000</div>
<div class="t" style="left:566.50px;top:350.30px;font-size:20.00px;line-height:80px;color:#808080;transform:scale(0.2144,0.25);-webkit-text-stroke:0.15px #808080;">$20,000</div>
<div class="t" style="left:575.80px;top:358.40px;font-size:20.00px;line-height:80px;color:#808080;transform:scale(0.2787,0.25);-webkit-text-stroke:0.15px #808080;">$0</div>
<div class="t" style="left:538.30px;top:375.90px;font-size:20.00px;line-height:80px;color:#666;transform:scale(0.2273,0.25);-webkit-text-stroke:0.15px #666;">Technology</div>
<div class="t" style="left:566.50px;top:368.00px;font-size:20.00px;line-height:80px;color:#808080;transform:scale(0.2144,0.25);-webkit-text-stroke:0.15px #808080;">$40,000</div>
<div class="t" style="left:566.50px;top:379.10px;font-size:20.00px;line-height:80px;color:#808080;transform:scale(0.2144,0.25);-webkit-text-stroke:0.15px #808080;">$20,000</div>
<div class="t" style="left:575.80px;top:387.40px;font-size:20.00px;line-height:80px;color:#808080;transform:scale(0.2787,0.25);-webkit-text-stroke:0.15px #808080;">$0</div>
<div class="t" style="left:538.30px;top:350.10px;font-size:20.00px;line-height:80px;color:#666;transform:scale(0.2151,0.25);-webkit-text-stroke:0.15px #666;">Supplies</div>
<div class="t" style="left:419.70px;top:394.90px;font-size:20.00px;line-height:80px;color:#888;transform:scale(0.2203,0.25);-webkit-text-stroke:0.15px #888;">2017</div>
<div class="t" style="left:446.30px;top:394.90px;font-size:20.00px;line-height:80px;color:#888;transform:scale(0.2203,0.25);-webkit-text-stroke:0.15px #888;">2018</div>
<div class="t" style="left:473.50px;top:394.90px;font-size:20.00px;line-height:80px;color:#888;transform:scale(0.2203,0.25);-webkit-text-stroke:0.15px #888;">2019</div>
<div class="t" style="left:500.10px;top:394.90px;font-size:20.00px;line-height:80px;color:#888;transform:scale(0.2203,0.25);-webkit-text-stroke:0.15px #888;">2020</div>
<div class="t" style="left:524.60px;top:394.90px;font-size:20.00px;line-height:80px;color:#888;transform:scale(0.2203,0.25);-webkit-text-stroke:0.15px #888;">2021</div>
<div class="t" style="left:584.80px;top:394.90px;font-size:20.00px;line-height:80px;color:#888;transform:scale(0.2203,0.25);-webkit-text-stroke:0.15px #888;">2017</div>
<div class="t" style="left:611.10px;top:394.90px;font-size:20.00px;line-height:80px;color:#888;transform:scale(0.2203,0.25);-webkit-text-stroke:0.15px #888;">2018</div>
<div class="t" style="left:637.90px;top:394.90px;font-size:20.00px;line-height:80px;color:#888;transform:scale(0.2203,0.25);-webkit-text-stroke:0.15px #888;">2019</div>
<div class="t" style="left:664.50px;top:394.90px;font-size:20.00px;line-height:80px;color:#888;transform:scale(0.2203,0.25);-webkit-text-stroke:0.15px #888;">2020</div>
<div class="t" style="left:690.60px;top:394.90px;font-size:20.00px;line-height:80px;color:#888;transform:scale(0.2203,0.25);-webkit-text-stroke:0.15px #888;">2021</div>
<svg class="r" style="left:420px;top:313.6px;" width="279.5" height="86.39999999999998" viewBox="420 313.6 279.5 86.39999999999998"><line x1="420.3" y1="316.9" x2="533.4" y2="316.9" stroke="#eeeeee" stroke-width="0.5"/><line x1="420.3" y1="324.5" x2="533.4" y2="324.5" stroke="#eeeeee" stroke-width="0.5"/><line x1="420.3" y1="333" x2="533.4" y2="333" stroke="#eeeeee" stroke-width="0.5"/><line x1="420.3" y1="345.8" x2="533.4" y2="345.8" stroke="#eeeeee" stroke-width="0.5"/><line x1="420.3" y1="352.7" x2="533.4" y2="352.7" stroke="#eeeeee" stroke-width="0.5"/><line x1="420.3" y1="362" x2="533.4" y2="362" stroke="#eeeeee" stroke-width="0.5"/><line x1="420.3" y1="374.5" x2="533.4" y2="374.5" stroke="#eeeeee" stroke-width="0.5"/><line x1="420.3" y1="381.6" x2="533.4" y2="381.6" stroke="#eeeeee" stroke-width="0.5"/><line x1="420.3" y1="390.7" x2="533.4" y2="390.7" stroke="#eeeeee" stroke-width="0.5"/><line x1="584.7" y1="320.9" x2="699" y2="320.9" stroke="#eeeeee" stroke-width="0.5"/><line x1="584.7" y1="332.2" x2="699" y2="332.2" stroke="#eeeeee" stroke-width="0.5"/><line x1="584.7" y1="349.2" x2="699" y2="349.2" stroke="#eeeeee" stroke-width="0.5"/><line x1="584.7" y1="360.3" x2="699" y2="360.3" stroke="#eeeeee" stroke-width="0.5"/><line x1="584.7" y1="378" x2="699" y2="378" stroke="#eeeeee" stroke-width="0.5"/><line x1="584.7" y1="389.1" x2="699" y2="389.1" stroke="#eeeeee" stroke-width="0.5"/></svg>
<svg class="r" style="left:420.3px;top:313.6px;" width="113.09999999999997" height="86.39999999999998" viewBox="420.3 313.6 113.09999999999997 86.39999999999998"><path d="M424.9,341.7 L424.9,339.1 L426.3,341.2 L429.3,337.1 L431.0,338.8 L433.4,335.9 L436.2,331.2 L439.8,335.9 L442.5,315.3 L444.3,338.3 L447.1,321.7 L449.0,325.0 L451.2,337.0 L454.0,335.5 L458.0,332.5 L462.0,337.0 L465.3,334.0 L469.4,325.0 L471.4,336.0 L475.9,324.7 L477.8,338.7 L479.9,340.8 L482.3,331.5 L484.3,335.9 L487.1,328.2 L489.2,331.5 L491.6,332.3 L494.0,335.9 L495.9,323.0 L498.1,336.7 L500.1,324.2 L502.5,320.1 L506.2,338.0 L507.4,338.7 L509.4,326.6 L511.0,337.9 L513.9,333.1 L517.1,333.9 L519.1,332.3 L522.4,323.0 L524.4,330.6 L526.4,331.0 L528.0,319.7 L529.1,319.7 L529.3,341.7 L529.3,341.7 Z" fill="#4f74a9" stroke="#1c4a8a" stroke-width="0.95" stroke-linejoin="round"/><path d="M424.9,341.7 L424.9,341.7 L428.0,341.2 L432.0,340.8 L436.0,340.6 L440.0,340.2 L442.5,336.8 L444.0,340.4 L447.0,337.2 L449.0,339.6 L452.0,340.0 L456.0,339.6 L460.0,340.2 L466.0,339.4 L470.0,339.6 L474.0,339.2 L476.2,338.3 L478.5,340.4 L482.7,338.7 L485.0,340.0 L490.0,339.8 L495.6,338.7 L498.0,340.0 L500.5,338.7 L503.0,339.6 L506.0,340.2 L509.0,339.4 L512.0,340.0 L516.0,339.4 L519.5,339.0 L522.4,338.3 L525.0,339.2 L527.6,337.1 L529.1,337.6 L529.3,341.7 L529.3,341.7 Z" fill="#fb8a1c"/><path d="M424.9,370.6 L424.9,370.4 L427.3,370.0 L430.5,365.1 L431.7,365.5 L435.0,368.7 L436.2,369.1 L438.2,366.7 L439.4,368.3 L442.7,364.3 L444.3,365.1 L447.5,361.5 L449.1,362.7 L451.2,367.9 L452.8,370.0 L454.0,369.1 L455.6,364.3 L457.2,368.7 L458.9,369.1 L462.5,367.1 L465.3,366.7 L469.4,363.9 L471.4,366.7 L473.8,359.0 L476.7,363.9 L479.9,369.1 L480.7,370.0 L482.3,364.7 L486.7,363.1 L489.2,366.7 L491.6,365.1 L494.4,364.7 L498.5,357.0 L500.1,359.0 L502.5,355.0 L505.4,366.7 L507.0,367.5 L509.0,363.9 L511.8,364.7 L515.9,362.3 L517.5,363.1 L520.7,359.4 L524.0,360.2 L527.2,350.9 L528.4,356.2 L529.1,366.7 L529.1,370.6 L529.1,370.6 Z" fill="#4f74a9" stroke="#1c4a8a" stroke-width="0.95" stroke-linejoin="round"/><path d="M424.9,370.6 L424.9,370.6 L429.7,369.6 L432.0,370.0 L436.0,369.8 L440.0,369.6 L442.7,367.5 L444.5,369.6 L448.0,369.4 L452.0,370.0 L458.0,369.6 L464.0,369.8 L470.0,369.4 L476.0,369.6 L482.0,369.8 L488.0,369.4 L494.0,369.6 L499.0,369.2 L502.5,368.0 L505.0,369.4 L510.0,369.6 L516.0,369.2 L521.0,369.4 L524.0,368.2 L526.8,364.3 L528.6,366.0 L529.1,370.6 L529.1,370.6 Z" fill="#fb8a1c"/><path d="M424.5,399.3 L424.5,397.1 L426.5,399.1 L429.3,385.0 L431.3,397.9 L433.4,399.1 L435.8,397.9 L438.6,397.9 L442.3,396.3 L444.3,398.7 L447.9,393.9 L450.4,395.9 L451.2,398.7 L453.2,399.6 L457.2,396.3 L461.3,398.7 L464.9,398.7 L469.0,395.5 L471.0,395.9 L475.5,390.9 L477.8,397.9 L479.9,398.3 L482.7,394.3 L485.5,396.3 L488.8,395.9 L492.0,398.3 L494.0,397.5 L498.1,391.9 L501.7,394.3 L507.4,396.7 L511.4,394.3 L513.9,396.3 L516.3,393.9 L520.3,396.7 L522.0,395.9 L525.2,386.6 L527.6,389.4 L528.8,394.3 L529.1,399.3 L529.1,399.3 Z" fill="#4f74a9" stroke="#1c4a8a" stroke-width="0.95" stroke-linejoin="round"/><path d="M424.5,399.3 L424.5,399.3 L426.5,399.2 L429.3,390.6 L432.0,399.2 L440.0,399.0 L450.0,399.1 L460.0,399.0 L470.0,399.0 L480.0,398.9 L484.7,398.7 L490.0,399.0 L495.6,398.3 L500.0,398.9 L506.0,398.9 L511.4,397.5 L515.0,398.8 L520.0,398.8 L526.0,397.9 L528.8,398.4 L529.1,399.3 L529.1,399.3 Z" fill="#fb8a1c"/></svg>
<svg class="r" style="left:584.7px;top:313.6px;" width="114.29999999999995" height="86.39999999999998" viewBox="584.7 313.6 114.29999999999995 86.39999999999998"><path d="M590.1,342 L590.1,339.6 L590.9,341.6 L594.4,334.9 L596.7,338.4 L598.3,338.8 L601.0,335.7 L603.75,337.7 L605.7,338.4 L607.5,329.5 L609.2,335.3 L610.8,334.9 L613.9,325.9 L615.1,329.1 L616.6,336.9 L618.2,341.6 L620.9,336.1 L624.1,337.3 L627.2,338.4 L629.5,335.3 L631.5,336.5 L634.4,328.3 L636.2,334.1 L638.5,325.9 L640.5,329.1 L642.7,339.2 L645.5,340.8 L647.4,335.7 L651.7,334.1 L653.7,334.9 L658.75,335.7 L660.7,328.3 L662.7,334.5 L667.0,322.8 L669.3,338.4 L671.25,339.2 L674.4,336.5 L675.9,337.7 L680.2,332.2 L683.0,336.1 L685.3,334.5 L687.3,327.1 L688.8,329.8 L692.3,322.8 L693.9,325.2 L694.1,342.0 L694.1,342 Z" fill="#4f74a9" stroke="#1c4a8a" stroke-width="0.95" stroke-linejoin="round"/><path d="M590.1,342 L590.1,342.0 L592.0,341.4 L594.4,338.8 L596.7,340.8 L601.4,340.4 L606.1,340.8 L609.0,340.0 L612.3,338.0 L613.9,338.8 L616.25,337.3 L617.8,341.6 L620.0,340.8 L623.3,340.4 L627.0,340.6 L630.0,339.6 L636.6,339.2 L642.8,340.8 L646.0,340.8 L652.0,340.6 L656.0,340.4 L660.7,337.7 L663.0,340.0 L667.0,338.0 L670.0,340.2 L675.0,340.0 L678.7,338.4 L682.0,339.6 L686.9,338.8 L689.0,338.0 L692.0,334.9 L693.9,335.3 L694.1,342.0 L694.1,342 Z" fill="#fb8a1c"/><path d="M590.1,370.5 L590.1,368.8 L591.25,370.3 L593.6,366.4 L595.9,365.3 L598.7,367.6 L602.6,363.3 L605.3,364.9 L607.7,356.3 L609.2,365.7 L612.0,356.7 L614.3,361.0 L615.9,370.0 L617.8,369.6 L620.5,362.9 L624.1,365.7 L627.2,366.0 L629.9,368.8 L634.2,360.6 L636.2,366.4 L638.9,359.8 L640.9,362.1 L642.7,368.4 L644.7,368.8 L647.4,362.1 L649.4,365.7 L651.7,364.1 L654.1,365.3 L656.4,364.5 L658.75,366.4 L660.7,359.0 L663.0,362.1 L665.0,360.6 L667.3,350.8 L671.25,366.4 L673.6,363.3 L677.5,363.3 L680.6,362.1 L682.6,364.9 L685.3,354.7 L687.3,354.7 L689.2,358.2 L692.3,353.9 L693.9,354.7 L694.1,370.5 L694.1,370.5 Z" fill="#4f74a9" stroke="#1c4a8a" stroke-width="0.95" stroke-linejoin="round"/><path d="M590.1,370.5 L590.1,370.5 L596.0,370.0 L600.0,370.0 L603.0,369.6 L605.0,370.0 L607.7,369.6 L610.0,370.0 L612.3,368.4 L615.0,370.0 L620.0,370.0 L630.0,369.8 L635.0,368.8 L638.0,369.8 L643.0,369.8 L647.8,369.2 L652.0,370.0 L660.7,370.0 L664.0,370.2 L668.5,370.0 L675.0,370.2 L682.0,370.0 L685.0,369.6 L687.3,367.2 L690.0,368.8 L693.5,368.0 L694.1,370.5 L694.1,370.5 Z" fill="#fb8a1c"/><path d="M590.1,398.75 L590.1,398.5 L592.4,398.1 L594.4,382.1 L595.9,394.2 L598.3,394.6 L601.4,395.4 L604.9,395.4 L607.7,382.9 L609.6,392.7 L612.0,383.7 L614.3,388.0 L616.25,397.0 L618.6,397.7 L620.9,394.2 L624.8,393.4 L627.2,396.2 L631.1,392.7 L634.2,389.5 L636.6,393.0 L640.9,380.5 L642.7,396.2 L647.4,388.4 L649.4,391.1 L652.1,384.5 L653.7,390.3 L658.4,393.8 L659.9,396.2 L663.0,382.9 L670.5,391.1 L672.0,395.8 L674.0,381.7 L675.9,393.4 L679.0,391.9 L683.4,387.2 L685.3,389.5 L687.7,384.5 L690.0,381.7 L692.2,373.1 L693.9,385.6 L694.1,398.75 L694.1,398.75 Z" fill="#4f74a9" stroke="#1c4a8a" stroke-width="0.95" stroke-linejoin="round"/><path d="M590.1,398.75 L590.1,398.75 L592.5,398.6 L594.4,392.3 L596.0,398.6 L600.0,398.5 L605.5,398.5 L607.7,390.7 L610.0,398.4 L612.0,396.6 L614.0,398.4 L620.0,398.5 L630.0,398.4 L638.0,398.3 L640.9,397.0 L643.0,398.4 L650.0,398.5 L660.0,398.4 L665.0,397.0 L668.0,398.3 L676.3,397.3 L680.0,398.3 L687.7,397.0 L690.0,397.8 L692.0,393.0 L693.9,396.6 L694.1,398.75 L694.1,398.75 Z" fill="#fb8a1c"/></svg>
<div class="t" style="left:369.10px;top:415.40px;font-size:25.60px;line-height:80px;color:#1f1f1f;transform:scale(0.2263,0.25);-webkit-text-stroke:0.58px #1f1f1f;">Best,</div>
<div class="t" style="left:369.10px;top:425.60px;font-size:25.60px;line-height:80px;color:#1f1f1f;transform:scale(0.2163,0.25);-webkit-text-stroke:0.58px #1f1f1f;">Harm Jan</div>
</body></html>
